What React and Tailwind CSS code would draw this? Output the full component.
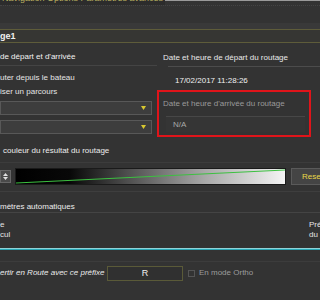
import React from "react";

export default function App() {
  return (
    <div
      className="w-[320px] h-[300px] overflow-hidden bg-[#333333] text-[#e4e4e4] text-[8px] leading-[10px] relative"
      style={{ fontFamily: '"Liberation Sans", Arial, sans-serif' }}
    >
      {/* top strip */}
      <div className="flex h-[5px]">
        <div className="w-[165px] h-[5px] overflow-hidden bg-[#2c2c2c]">
          <div className="-mt-[7px] text-[#b8b060] whitespace-nowrap text-[9px] leading-[10px] pl-[2px]">
            Navigation      Options      Paramètres avancés
          </div>
        </div>
        <div className="flex-1 h-[5px] border-t border-[#9a9a9a] bg-[#333]" />
      </div>
      <div className="h-[18px] bg-[#333] border-t border-dotted border-[#444]" />
      <div className="h-[6px] bg-[#393939]" />
      {/* title row */}
      <div className="h-[1px] bg-[#5e5c3a]" />
      <div className="h-[12px] bg-[#363633] flex items-center text-[9px] text-[#f0f0f0] font-bold">ge1</div>
      <div className="h-[1px] bg-[#5e5c3a]" />

      <div className="flex">
        {/* left column */}
        <div className="w-[157px] flex flex-col">
          <div className="h-[23px] flex items-end pb-[3px] border-b border-[#444] text-[#f2f2f2] whitespace-nowrap">
            de départ et d'arrivée
          </div>
          <div className="h-[6px]" />
          <div className="h-[12px] flex items-center whitespace-nowrap">uter depuis le bateau</div>
          <div className="h-[2px]" />
          <div className="h-[12px] flex items-center whitespace-nowrap">iser un parcours</div>
          <div className="h-[3px]" />
          <div className="w-[152px] h-[14px] bg-[#3d3d3d] border border-[#585858] flex items-center justify-end pr-[5px]">
            <svg width="5" height="4" viewBox="0 0 5 4">
              <polygon points="0,0 5,0 2.5,4" fill="#d8c830" />
            </svg>
          </div>
          <div className="h-[5px]" />
          <div className="w-[152px] h-[14px] bg-[#3d3d3d] border border-[#585858] flex items-center justify-end pr-[5px]">
            <svg width="5" height="4" viewBox="0 0 5 4">
              <polygon points="0,0 5,0 2.5,4" fill="#d8c830" />
            </svg>
          </div>
        </div>
        {/* right column */}
        <div className="flex-1 flex flex-col">
          <div className="h-[23px] flex items-end pb-[3px] pl-[6px] whitespace-nowrap text-[#e8e8e8]">
            Date et heure de départ du routage
          </div>
          <div className="ml-[11px] h-[24px] border-t border-[#4c4c4c] flex items-center pl-[7px] pt-[4px] text-[#f0f0f0]">
            17/02/2017 11:28:26
          </div>
          <div className="w-[154px] h-[47px] border-2 border-[#e0141a] flex flex-col">
            <div className="h-[24px] flex items-center pl-[4px] text-[#9a9a9a] whitespace-nowrap">
              Date et heure d'arrivée du routage
            </div>
            <div className="ml-[7px] mr-[4px] h-[16px] border-t border-[#474747] bg-[#353535] flex items-center pl-[7px] text-[#a8a8a8]">
              N/A
            </div>
          </div>
        </div>
      </div>

      <div className="h-[9px]" />
      <div className="h-[10px] flex items-center pl-[3px] whitespace-nowrap text-[#ececec]">couleur du résultat du routage</div>
      <div className="h-[7px] border-b border-[#3c3c3c]" />
      <div className="h-[5px]" />
      {/* gradient row */}
      <div className="flex items-center h-[17px]">
        <div className="w-[11px] h-[13px] shrink-0 bg-[#4a4a4a] border border-[#666] flex flex-col items-center justify-center gap-[1px]">
          <svg width="5" height="3" viewBox="0 0 5 3"><polygon points="0,3 5,3 2.5,0" fill="#e0e0e0" /></svg>
          <svg width="5" height="3" viewBox="0 0 5 3"><polygon points="0,0 5,0 2.5,3" fill="#e0e0e0" /></svg>
        </div>
        <div className="ml-[4px] w-[271px] shrink-0 h-[17px] border border-[#1a1a1a] relative bg-[linear-gradient(to_right,#000000_0%,#080808_20%,#505050_42%,#a8a8a8_70%,#f4f4f4_100%)]">
          <svg className="absolute inset-0" width="269" height="15" viewBox="0 0 269 15" preserveAspectRatio="none">
            <line x1="0" y1="14" x2="269" y2="1" stroke="#3cc040" strokeWidth="1.2" />
          </svg>
        </div>
        <div className="ml-[5px] h-[17px] w-[44px] shrink-0 bg-[#444] border border-[#5a5a5a] flex items-center pl-[10px] text-[#e8d848] whitespace-nowrap">
          Reset
        </div>
      </div>
      <div className="h-[7px] border-b border-[#3e3e3e]" />
      <div className="h-[21px] flex items-end border-b border-[#444] whitespace-nowrap text-[#ececec]">mètres automatiques</div>
      <div className="h-[7px]" />
      <div className="flex justify-between">
        <div className="flex flex-col leading-[10px]">
          <span>e</span>
          <span>cul</span>
        </div>
        <div className="flex flex-col leading-[10px] w-[11px] whitespace-nowrap">
          <span>Pré</span>
          <span>du</span>
        </div>
      </div>
      <div className="h-[8px]" />
      <div className="h-[1px] bg-[#8fd4da]" />
      <div className="h-[1px] bg-[#2aa8b6]" />
      <div className="h-[12px] border-b border-[#3c3c3c]" />
      <div className="h-[3px]" />
      <div className="flex items-center h-[16px]">
        <div className="w-[107px] italic whitespace-nowrap text-[#ececec]">ertir en Route avec ce préfixe</div>
        <div className="w-[76px] h-[15px] border border-[#5a5a38] bg-[#303030] flex items-center justify-center text-[9px] text-[#f0f0f0]">
          R
        </div>
        <div className="ml-[5px] w-[7px] h-[7px] border border-[#555] bg-[#333]" />
        <div className="ml-[4px] text-[#9c9c9c] whitespace-nowrap">En mode Ortho</div>
      </div>
    </div>
  );
}
